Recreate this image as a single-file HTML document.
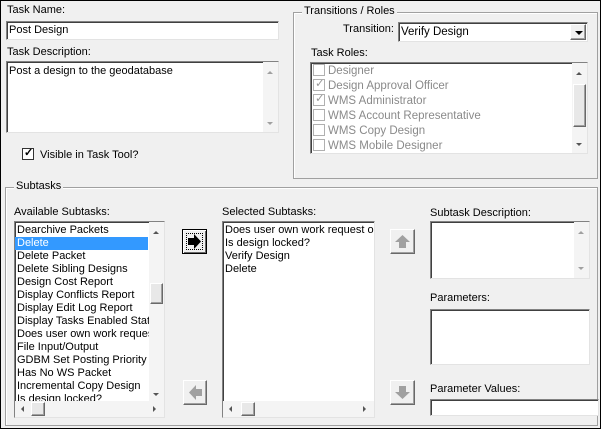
<!DOCTYPE html>
<html><head><style>
*{margin:0;padding:0;box-sizing:border-box}
body{width:601px;height:429px;background:#f0f0f0;font-family:"Liberation Sans",sans-serif;font-size:11px;color:#000;position:relative;overflow:hidden}
#frame{position:absolute;left:0;top:0;width:601px;height:429px;border:1px solid #000}
.a{position:absolute;white-space:nowrap}
.box{position:absolute;background:#fff;border-top:1px solid #828282;border-left:1px solid #828282;border-right:1px solid #e3e3e3;border-bottom:1px solid #e3e3e3;box-shadow:inset 1px 1px 0 #404040;overflow:hidden}
.grp{position:absolute;border:1px solid #a0a0a0;box-shadow:inset 1px 1px 0 #fff}
.leg{position:absolute;background:#f0f0f0;padding:0 2px;white-space:nowrap}
.vs{position:absolute;background:#f4f4f4;width:15px}
.btn{position:absolute;background:#f0f0f0;border:1px solid;border-color:#fff #696969 #696969 #fff;box-shadow:inset -1px -1px 0 #a0a0a0}
.item{height:13px;line-height:13px;padding-left:2px;white-space:nowrap}
.ri{height:15px;line-height:15px;color:#8a8a8a;white-space:nowrap;font-size:11.5px}
.cb{display:inline-block;width:12px;height:12px;border:1px solid #b0b0b0;background:#fff;vertical-align:-2px;margin:0 3px 0 2px;position:relative}
.tri{position:absolute;width:0;height:0;border-left:3px solid transparent;border-right:3px solid transparent}
.trh{position:absolute;width:0;height:0;border-top:3px solid transparent;border-bottom:3px solid transparent}
</style></head><body>
<div id="frame"></div>

<div class="a" style="left:7px;top:4px">Task Name:</div>
<div class="box" style="left:6px;top:21px;width:273px;height:19px"><div class="a" style="left:2px;top:2px">Post Design</div></div>
<div class="a" style="left:7px;top:46px">Task Description:</div>
<div class="box" style="left:6px;top:61px;width:273px;height:72px"><div class="a" style="left:2px;top:3px">Post a design to the geodatabase</div>
<div class="vs" style="right:0;top:0;height:70px"></div>
<div class="tri" style="right:5px;top:9px;border-bottom:3px solid #a0a0a0"></div>
<div class="tri" style="right:5px;top:60px;border-top:3px solid #a0a0a0"></div></div>
<div class="a" style="left:22px;top:148px"><span class="cb" style="border-color:#333;margin:0"><span style="position:absolute;left:1px;top:-3px;font-size:11px;font-weight:bold">✓</span></span><span style="margin-left:6px">Visible in Task Tool?</span></div>

<div class="grp" style="left:293px;top:12px;width:305px;height:167px"></div>
<div class="leg" style="left:302px;top:5px">Transitions / Roles</div>
<div class="a" style="left:343px;top:23px">Transition:</div>
<div class="box" style="left:398px;top:22px;width:190px;height:20px"><div class="a" style="left:2px;top:3px;font-size:11.5px">Verify Design</div>
<div class="btn" style="right:1px;top:1px;width:16px;height:16px"><div class="tri" style="left:4px;top:6px;border-left-width:4px;border-right-width:4px;border-top:4px solid #000"></div></div></div>
<div class="a" style="left:311px;top:47px">Task Roles:</div>
<div class="box" style="left:310px;top:62px;width:278px;height:92px"><div style="padding-top:1px">
<div class="ri"><span class="cb"></span>Designer</div>
<div class="ri"><span class="cb"><span style="position:absolute;left:1px;top:-3px;color:#999">✓</span></span>Design Approval Officer</div>
<div class="ri"><span class="cb"><span style="position:absolute;left:1px;top:-3px;color:#999">✓</span></span>WMS Administrator</div>
<div class="ri"><span class="cb"></span>WMS Account Representative</div>
<div class="ri"><span class="cb"></span>WMS Copy Design</div>
<div class="ri"><span class="cb"></span>WMS Mobile Designer</div></div>
<div class="vs" style="right:0;top:0;height:90px"></div>
<div class="btn" style="right:1px;top:21px;width:13px;height:43px;background:#e8e8e8"></div>
<div class="tri" style="right:5px;top:9px;border-bottom:3px solid #555"></div>
<div class="tri" style="right:5px;top:80px;border-top:3px solid #555"></div></div>

<div class="grp" style="left:5px;top:187px;width:593px;height:239px"></div>
<div class="leg" style="left:14px;top:180px">Subtasks</div>
<div class="a" style="left:14px;top:206px">Available Subtasks:</div>
<div class="box" style="left:14px;top:221px;width:151px;height:197px"><div style="padding-top:2px;font-size:11px">
<div class="item">Dearchive Packets</div>
<div class="item" style="background:#3399ff;color:#fff;width:133px">Delete</div>
<div class="item">Delete Packet</div>
<div class="item">Delete Sibling Designs</div>
<div class="item">Design Cost Report</div>
<div class="item">Display Conflicts Report</div>
<div class="item">Display Edit Log Report</div>
<div class="item">Display Tasks Enabled Stat</div>
<div class="item">Does user own work reques</div>
<div class="item">File Input/Output</div>
<div class="item">GDBM Set Posting Priority</div>
<div class="item">Has No WS Packet</div>
<div class="item">Incremental Copy Design</div>
<div class="item">Is design locked?</div></div>
<div class="vs" style="right:0;top:0;height:179px"></div>
<div class="btn" style="right:1px;top:61px;width:13px;height:21px;background:#e8e8e8"></div>
<div class="tri" style="right:5px;top:9px;border-bottom:3px solid #555"></div>
<div class="tri" style="right:5px;top:171px;border-top:3px solid #555"></div>
<div style="position:absolute;left:0;top:179px;width:149px;height:16px;background:#f4f4f4"></div>
<div class="trh" style="left:6px;top:184px;border-right:3px solid #555"></div>
<div class="trh" style="left:138px;top:184px;border-left:3px solid #555"></div>
<div class="btn" style="left:16px;top:180px;width:14px;height:14px;background:#e8e8e8"></div>
</div>

<div class="btn" style="left:182px;top:229px;width:25px;height:25px;border:1px solid #000;box-shadow:inset 1px 1px 0 #fff,inset -1px -1px 0 #696969">
<div style="position:absolute;left:3px;top:3px;width:17px;height:17px;border:1px dotted #000"></div>
<svg style="position:absolute;left:4px;top:4px" width="15" height="15" viewBox="0 0 15 15"><path d="M1 4h6V0l7 7.5-7 7.5v-4H1z" fill="#000"/></svg></div>
<div class="btn" style="left:183px;top:380px;width:24px;height:25px"><svg style="position:absolute;left:4px;top:4px" width="15" height="15" viewBox="0 0 15 15"><path d="M14 4H8V0L1 7.5 8 15v-4h6z" fill="#a0a0a0"/></svg></div>

<div class="a" style="left:222px;top:206px">Selected Subtasks:</div>
<div class="box" style="left:222px;top:221px;width:153px;height:197px"><div style="padding-top:2px;font-size:11px">
<div class="item">Does user own work request or</div>
<div class="item">Is design locked?</div>
<div class="item">Verify Design</div>
<div class="item">Delete</div></div>
<div style="position:absolute;left:0;top:179px;width:151px;height:16px;background:#f4f4f4"></div>
<div class="trh" style="left:6px;top:184px;border-right:3px solid #555"></div>
<div class="trh" style="left:140px;top:184px;border-left:3px solid #555"></div>
<div class="btn" style="left:18px;top:180px;width:14px;height:14px;background:#e8e8e8"></div>
</div>

<div class="btn" style="left:390px;top:229px;width:25px;height:25px"><svg style="position:absolute;left:4px;top:4px" width="15" height="15" viewBox="0 0 15 15"><path d="M4 14V8H0l7.5-7L15 8h-4v6z" fill="#a0a0a0"/></svg></div>
<div class="btn" style="left:390px;top:380px;width:25px;height:25px"><svg style="position:absolute;left:4px;top:4px" width="15" height="15" viewBox="0 0 15 15"><path d="M4 1v6H0l7.5 7L15 7h-4V1z" fill="#a0a0a0"/></svg></div>

<div class="a" style="left:430px;top:207px">Subtask Description:</div>
<div class="box" style="left:430px;top:221px;width:160px;height:58px">
<div class="vs" style="right:0;top:0;height:56px"></div>
<div class="tri" style="right:5px;top:9px;border-bottom:3px solid #a0a0a0"></div>
<div class="tri" style="right:5px;top:45px;border-top:3px solid #a0a0a0"></div></div>
<div class="a" style="left:430px;top:292px">Parameters:</div>
<div class="box" style="left:430px;top:309px;width:160px;height:56px"></div>
<div class="a" style="left:430px;top:383px">Parameter Values:</div>
<div class="box" style="left:430px;top:399px;width:169px;height:17px"></div>
</body></html>
